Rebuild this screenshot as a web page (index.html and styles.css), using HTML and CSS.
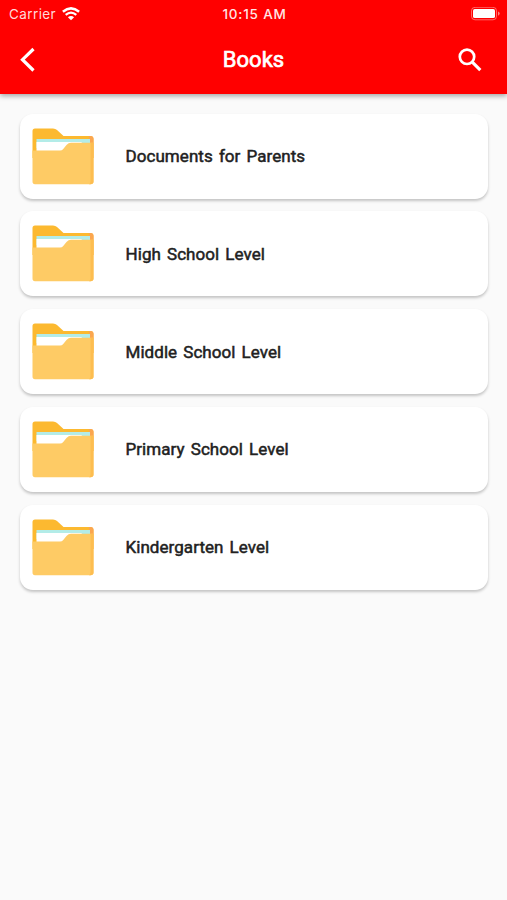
FILE: index.html
```html
<!DOCTYPE html>
<html lang="en">
<head>
<meta charset="UTF-8">
<meta name="viewport" content="width=device-width, initial-scale=1.0">
<title>Books</title>
<link rel="stylesheet" href="styles.css">
</head>
<body>
  <!-- Folder icon, used by every card -->
  <svg class="defs" width="0" height="0">
    <symbol id="folder" viewBox="0 0 62 57">
      <path d="M3 0.500H21Q23.500 0.500 25 2L31.500 8H58.500Q61.500 8 61.500 11V30H0.500V3Q0.500 0.500 3 0.500Z" fill="#fcb930"/>
      <path d="M57 8H58.500Q61.500 8 61.500 11V30H57Z" fill="#fba650"/>
      <path d="M4.500 11H58V20H4.500Z" fill="#b3ece8"/>
      <path d="M4.500 14H50L44 24H4.500Z" fill="#fff"/>
      <path d="M0.500 22.500H28Q30 22.500 31 21.300L34.500 17Q36.500 14.800 39 14.800H61.500V53.500Q61.500 56.300 58.500 56.300H3Q0.500 56.300 0.500 53.500Z" fill="#fecb65"/>
      <path d="M58.500 14.800H61.500V53.500Q61.500 56.300 58.500 56.300H57Q58.500 55.500 58.500 53Z" fill="#fdbd50"/>
    </symbol>
  </svg>

  <header class="header">
    <div class="status">
      <div class="carrier">
        <span>Carrier</span>
        <svg class="wifi" width="18" height="14" viewBox="0 0 18 14">
          <path d="M0.900 4.700Q9-2 17.100 4.700" fill="none" stroke="#fff" stroke-width="2.500"/>
          <path d="M3.700 7.900Q9 3.300 14.300 7.900" fill="none" stroke="#fff" stroke-width="2.200"/>
          <path d="M5.900 10.200Q9 7.600 12.100 10.200L9 13.300Z" fill="#fff"/>
        </svg>
      </div>
      <div class="time">10:15 AM</div>
      <svg class="battery" width="30" height="14" viewBox="0 0 30 14">
        <rect x="1.500" y="0.300" width="25" height="12.500" rx="3.500" fill="none" stroke="#fff" stroke-opacity="0.400"/>
        <rect x="3" y="2" width="22" height="9.100" rx="1.700" fill="#fff"/>
        <path d="M28 4.500Q29.700 5 29.700 6.600T28 8.700Z" fill="#fff" fill-opacity="0.500"/>
      </svg>
    </div>
    <div class="navbar">
      <svg class="back" width="16" height="26" viewBox="0 0 16 26">
        <path d="M13.500 2L2.500 12.700L13.500 23.500" fill="none" stroke="#fff" stroke-width="3.200"/>
      </svg>
      <h1 class="title">Books</h1>
      <svg class="search" width="24" height="24" viewBox="0 0 24 24">
        <circle cx="9" cy="8.800" r="7.200" fill="none" stroke="#fff" stroke-width="2.700"/>
        <path d="M14.300 14.100L22.300 22.100" stroke="#fff" stroke-width="3.200"/>
      </svg>
    </div>
  </header>

  <main class="list">
    <div class="card">
      <svg class="folder"><use href="#folder"/></svg>
      <span class="label">Documents for Parents</span>
    </div>
    <div class="card">
      <svg class="folder"><use href="#folder"/></svg>
      <span class="label">High School Level</span>
    </div>
    <div class="card">
      <svg class="folder"><use href="#folder"/></svg>
      <span class="label">Middle School Level</span>
    </div>
    <div class="card">
      <svg class="folder"><use href="#folder"/></svg>
      <span class="label">Primary School Level</span>
    </div>
    <div class="card">
      <svg class="folder"><use href="#folder"/></svg>
      <span class="label">Kindergarten Level</span>
    </div>
  </main>
</body>
</html>
```
FILE: styles.css
```css
* {
  box-sizing: border-box;
}
body {
  margin: 0;
  min-height: 100vh;
  background-color: #fafafa;
  font-family: Roboto, sans-serif;
  color: #212121;
}
.defs {
  display: block;
}
.header {
  height: 94px;
  background-color: #ff0000;
  color: white;
  box-shadow: 0 2px 5px rgba(0, 0, 0, 0.35);
}
.status {
  display: grid;
  grid-template-columns: 1fr auto 1fr;
  align-items: center;
  height: 27px;
  padding: 0 7px 0 9px;
  font-family: Inter, sans-serif;
  font-size: 13.5px;
}
.carrier {
  display: flex;
  align-items: center;
  gap: 5.5px;
  letter-spacing: 0.4px;
  color: #ffd9d9;
}
.time {
  font-weight: 500;
  letter-spacing: 0.8px;
  color: #ffe6e6;
}
.battery {
  justify-self: end;
}
.navbar {
  display: grid;
  grid-template-columns: 1fr auto 1fr;
  align-items: center;
  height: 65px;
  padding: 0 25px 0 20px;
}
.title {
  margin: 0 0 0 5px;
  font-size: 22px;
  font-weight: 400;
  letter-spacing: 0;
  -webkit-text-stroke: 0.7px white;
}
.search {
  justify-self: end;
}
.list {
  display: flex;
  flex-direction: column;
  gap: 12.75px;
  padding: 19.5px 19.5px 0 20px;
}
.card {
  display: flex;
  align-items: center;
  gap: 31.5px;
  height: 85px;
  padding-left: 12px;
  background-color: white;
  border-radius: 13px;
  box-shadow: 0 2px 3px rgba(0, 0, 0, 0.22);
}
.folder {
  width: 62px;
  height: 57px;
}
.label {
  font-size: 17px;
  font-weight: 400;
  letter-spacing: 0.06px;
  word-spacing: 1.8px;
  -webkit-text-stroke: 0.5px #212121;
}
```
